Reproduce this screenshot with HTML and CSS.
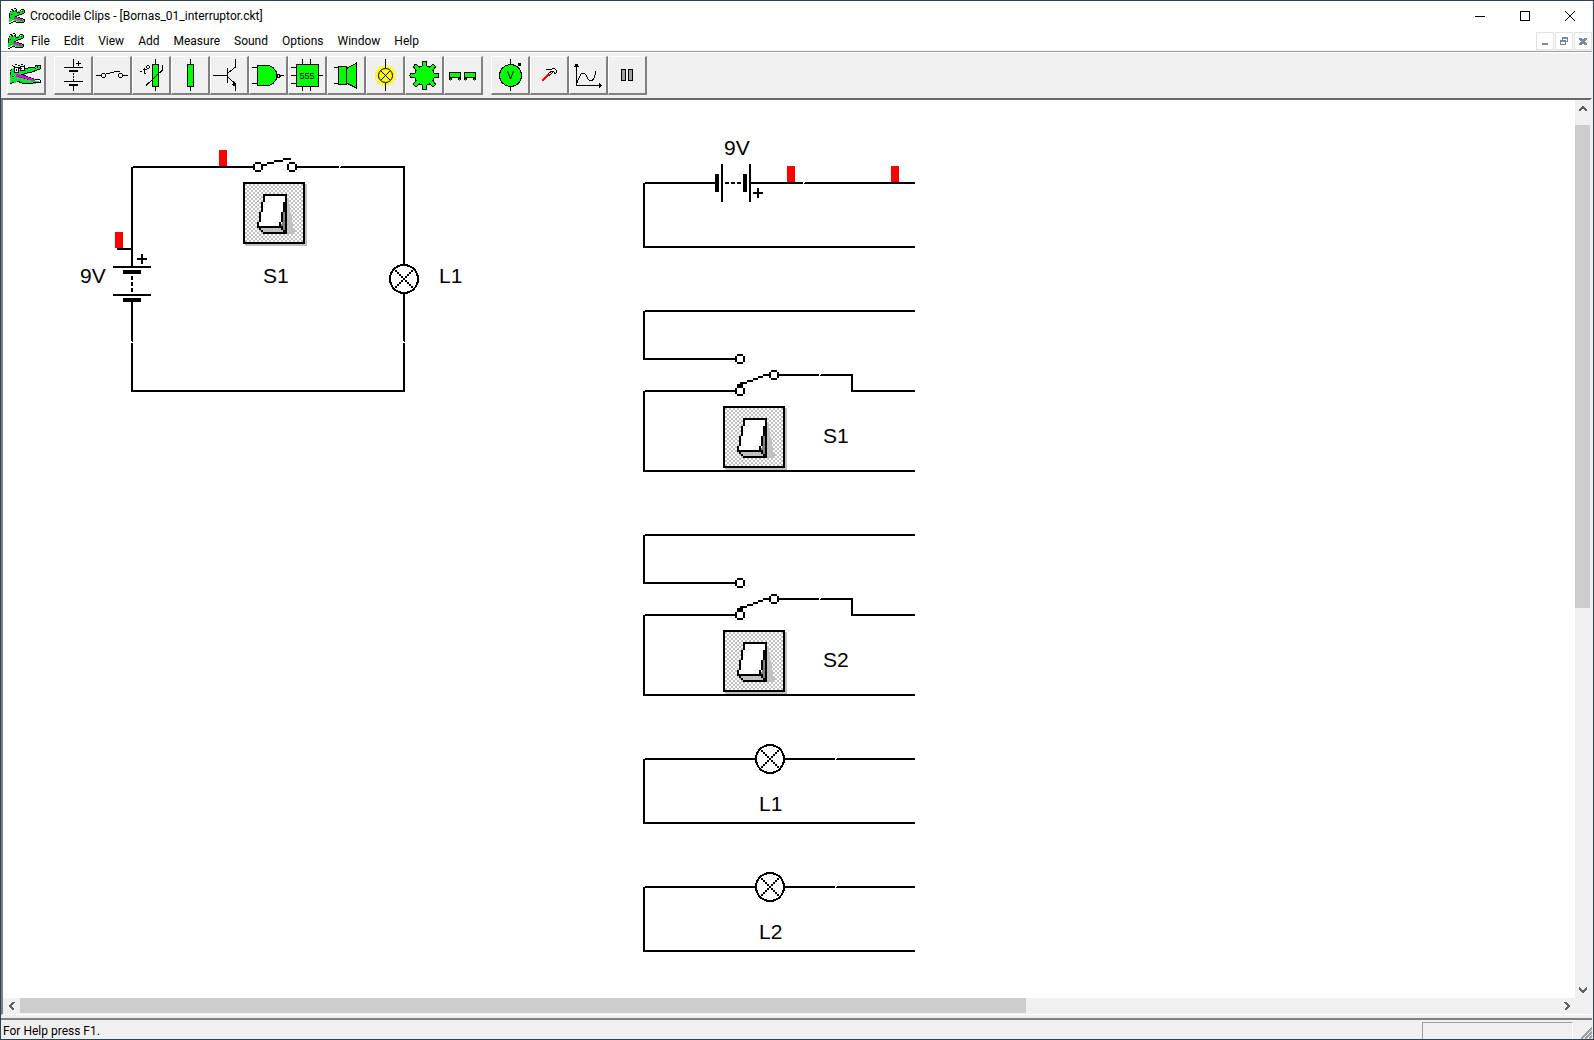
FILE: index.html
```html
<!DOCTYPE html>
<html lang="en">
<head>
<meta charset="utf-8">
<title>Crocodile Clips - [Bornas_01_interruptor.ckt]</title>
<link rel="stylesheet" href="styles.css">
</head>
<body>
<svg class="defs" aria-hidden="true">
  <defs>
    <symbol id="croc-small" viewBox="0 0 16 16">
      <path d="M1 4h1v-1h5v1h2v-1h4v-1h3v3h-2v1h-3v1h-2v1h-2v1h2v1h2v1h3v1h2v2h-8v-1h-3v-1h-2v1h-1v1H0V9h1z" fill="#00e020"/>
      <path d="M1 3h1v1H1zM0 5h1v5H0zM2 1h2v1H2zM5 0h2v1H5zM4 2h1v2H4zM7 1h1v3H7zM8 4h3v1H8zM11 2h1v1h-1zM12 1h3v1h-3zM15 2h1v3h-1zM13 5h2v1h-2zM10 6h3v1h-3zM8 7h2v1H8zM6 8h2v1H6zM9 9h2v1H9zM11 10h3v1h-3zM14 11h2v1h-2zM15 12h1v2h-1zM7 14h8v1H7zM4 13h3v1H4zM2 14h2v1H2zM0 15h2v1H0z"/>
      <path d="M2 2h2v1H2zM5 1h2v2H5zM11 7h1v1h-1zM13 6h1v1h-1z" fill="#fff"/>
      <path d="M5 9h3v1h2v1h3v1h1v1h-3v-1H8v-1H5z" fill="#e0e"/>
      <path d="M3 2h1v1H3zM6 2h1v1H6zM13 3h1v1h-1zM2 6h1v1H2z"/>
    </symbol>
    <symbol id="battery-cells" viewBox="0 0 38 36" overflow="visible">
      <path d="M0 0h38v2H0zM10 4h18v4H10zM18 10h2v4h-2zM18 16h2v4h-2zM18 22h2v4h-2zM0 28h38v2H0zM10 32h18v4H10z"/>
    </symbol>
    <pattern id="dither" width="4" height="4" patternUnits="userSpaceOnUse">
      <rect width="4" height="4" fill="#fff"/>
      <path d="M0 0h2v2H0zM2 2h2v2H2z" fill="#c0c0c0"/>
    </pattern>
    <g id="rocker">
      <path d="M2 2h62v62H2z" fill="#c0c0c0"/>
      <path d="M1 1h60v60H1z" fill="url(#dither)" stroke="#000" stroke-width="2"/>
      <path d="M44 18h2v6h1v8h2v8h1v6h2v6h-8z" fill="#c0c0c0"/>
      <path d="M21 13H43L38 45H15z" fill="#fff"/>
      <path d="M15 45H38L43 51H20z" fill="#c0c0c0"/>
      <path d="M43 14V51L38 45z" fill="#808080"/>
      <path d="M20 12h24v40H20v-2h-2v-2h-2v-2h-2v-6h2v-10h2v-10h2zM22 14v6h-2v10h-2v10h-2v4h20v-4h2v-10h2v-10h2v-6zM18 46v2h2v2h20v-2h-2v-2zM42 30h-2v10h-2v4h2v4h2z" fill-rule="evenodd"/>
    </g>
    <g id="terminal">
      <path d="M-3 -5h6v2h2v6h-2v2h-6v-2h-2v-6h2z"/>
      <path d="M-2 -3h5v6h-6v-6z" fill="#fff"/>
    </g>
    <g id="lamp">
      <circle r="14" fill="#fff" stroke="#000" stroke-width="2"/>
      <path id="lamp-stroke" d="M-11 -11h2v2h-2zM-9 -9h2v2h-2zM-7 -7h2v2h-2zM-5 -5h2v2h-2zM-3 -3h2v2h-2zM-1 -1h2v2h-2zM1 1h2v2h-2zM3 3h2v2h-2zM5 5h2v2h-2zM7 7h2v2h-2zM9 9h2v2h-2z"/>
      <use href="#lamp-stroke" transform="scale(-1 1)"/>
    </g>
    <path id="plus" d="M-5 -1h4v-4h2v4h4v2h-4v4h-2v-4h-4z"/>
    <g id="changeover">
      <path d="M645 0H915V2H645zM643 1h2V48H735V50H643zM645 80H735V82H645zM643 81h2V160H915V162H643z"/>
      <path d="M779 64H819V66H779zM820 65h1v1h-1zM821 64H853V80H915V82H851V66H821z"/>
      <path d="M763 64h6v2h-6zM758 66h5v2h-5zM753 68h5v2h-5zM747 70h6v2h-6zM740 72h7v2h-7zM737 74h6v2h-6z"/>
      <use href="#terminal" x="740" y="49"/>
      <use href="#terminal" x="740" y="81"/>
      <use href="#terminal" x="774" y="65"/>
      <use href="#rocker" transform="translate(723 96)"/>
    </g>
    <g id="lamp-loop">
      <path d="M645 0H835V2H645zM836 1h1v1h-1zM837 0H915V2H837zM643 1h2V64H915V66H643z"/>
      <use href="#lamp" x="770" y="1"/>
    </g>
    <path id="teeth" d="M19.500 7V32M7 19.500H32M10.700 10.700L28.300 28.300M28.300 10.700L10.700 28.300"/>
  </defs>
</svg>

<div class="window">
  <header class="titlebar">
    <svg class="app-icon"><use href="#croc-small"/></svg>
    <h1 class="title">Crocodile Clips - [Bornas_01_interruptor.ckt]</h1>
    <div class="caption-buttons">
      <button class="caption-button" aria-label="Minimize"><svg width="12" height="12"><path d="M1 6.500h10"/></svg></button>
      <button class="caption-button" aria-label="Maximize"><svg width="12" height="12"><path d="M1.500 1.500h9v9h-9z"/></svg></button>
      <button class="caption-button" aria-label="Close"><svg class="smooth" width="12" height="12"><path d="M1 1L11 11M11 1L1 11"/></svg></button>
    </div>
  </header>

  <nav class="menubar">
    <svg class="app-icon"><use href="#croc-small"/></svg>
    <div class="menus">
      <button class="menu">File</button>
      <button class="menu">Edit</button>
      <button class="menu">View</button>
      <button class="menu">Add</button>
      <button class="menu">Measure</button>
      <button class="menu">Sound</button>
      <button class="menu">Options</button>
      <button class="menu">Window</button>
      <button class="menu">Help</button>
    </div>
    <div class="document-buttons">
      <button class="document-button" aria-label="Minimize document"><svg width="10" height="10"><path d="M2 7h6v2H2z"/></svg></button>
      <button class="document-button" aria-label="Restore document"><svg width="10" height="10"><path d="M3 1h6v5H7V5h1V3H4v1H3zM1 4h6v5H1zM2 6v2h4V6z" fill-rule="evenodd"/></svg></button>
      <button class="document-button" aria-label="Close document"><svg width="10" height="10"><path d="M1 2h3v1h2V2h3v2H8v1H7v1h1v1h1v2H6V8H4v1H1V7h1V6h1V5H2V4H1z"/></svg></button>
    </div>
  </nav>

  <div class="toolbar" role="toolbar" aria-label="Parts">
    <div class="tool-group">
      <button class="tool" aria-label="Crocodile"><svg viewBox="1 1 36 36">
        <path d="M3 15l3-3 3 2 8-1 6-1 5-1 1-2h4v4l-4 2-6 2-7 2-3 1 4 2 7 2 8 1v2l-6 1H16l-5-2-4 1-4 1z" fill="#00e830"/>
        <path d="M3 15l2-2M18 12h3l4-1h3l1-2h4v4l-3 1-5 2-5 1-6 2M16 19l5 2 6 2 6 1v2h-3l-4 1H15l-5-2M3 28l4-2M3 16v3M5 20h2M27 11l2 2" class="ln"/>
        <path d="M7 11h4v5H7zM13 10h4v4h-4z" fill="#fff" stroke="#000"/>
        <path d="M5 9h1v1H5zM6 10h2v1H6zM8 8h2v1H8zM11 9h2v1h-2zM14 8h2v1h-2zM17 9h1v1h-1zM12 11h1v2h-1zM9 13h1v2H9zM14 12h1v1h-1zM30 10h1v2h-1z"/>
        <path d="M9 18h4v1h3v1h3v1h3v1h3v1h3v2h-4v-1h-4v-1h-4v-1h-4v-1h-3z" fill="#e0e"/>
        <path d="M11 20h1v1h-1zM14 21h1v1h-1zM17 22h1v1h-1zM20 23h1v1h-1zM16 19h1v1h-1z" fill="#505"/>
        <path d="M19 19h1v1h-1zM22 18h1v1h-1zM25 17h1v1h-1zM28 16h1v1h-1z" fill="#fff"/>
      </svg></button>
    </div>
    <div class="tool-group">
      <button class="tool" aria-label="Battery"><svg viewBox="1 1 36 36">
        <path d="M19 3h1v8h-1zM10 11h19v1H10zM15 14h9v2h-9zM19 17h1v2h-1zM19 20h1v2h-1zM19 23h1v2h-1zM10 25h19v1H10zM15 28h9v2h-9zM19 30h1v5h-1zM22 7h5v1h-5zM24 5h1v5h-1z"/>
      </svg></button>
      <button class="tool" aria-label="Switch"><svg viewBox="1 1 36 36">
        <path d="M3 19h5v1H3zM30 19h5v1h-5zM13 17h4v1h-4zM17 16h4v1h-4zM21 15h6v1h-6zM9 17h3v1H9zM9 21h3v1H9zM8 18h1v3H8zM12 18h1v3h-1zM26 17h3v1h-3zM26 21h3v1h-3zM25 18h1v3h-1zM29 18h1v3h-1z"/>
      </svg></button>
      <button class="tool" aria-label="Thermistor"><svg viewBox="1 1 36 36">
        <path d="M23.500 3v32" class="ln"/><path d="M20.500 8.500h6v22h-6z" class="part"/>
        <path d="M14 29.500L30.500 14V8.500M8 15.500h2M11 13.500h4M12.500 12v5M12 17.500h2" class="ln"/>
        <path d="M15 9h2v1h1v2h-1v1h-2v-1h-1v-2h1zM15 10v2h2v-2z" fill-rule="evenodd"/>
      </svg></button>
      <button class="tool" aria-label="Resistor"><svg viewBox="1 1 36 36">
        <path d="M19.500 3v32" class="ln"/><path d="M16.500 8.500h6v22h-6z" class="part"/>
      </svg></button>
      <button class="tool" aria-label="Transistor"><svg viewBox="1 1 36 36">
        <path d="M3 19.500h15M17.500 12v15M18 17l7.500-6V3M18 21l7.500 7v7" class="ln"/><path d="M25 30l-4-1 3-3z"/>
      </svg></button>
      <button class="tool" aria-label="Logic gate"><svg viewBox="1 1 36 36">
        <path d="M3 11.500h5M3 27.500h5M30 19.500h5" class="ln"/>
        <path d="M8.500 9.500H20l4 2 3 4v8l-3 4-4 2H8.500z" class="part"/>
        <path d="M28 18h2v1h1v1h-1v1h-2z" fill="#f0f0f0" stroke="#000"/>
      </svg></button>
      <button class="tool" aria-label="Integrated circuit"><svg viewBox="1 1 36 36">
        <path d="M14.500 3v32M22.500 3v32M3 11.500h28M3 19.500h32M3 27.500h28" class="ln"/>
        <path d="M8.500 8.500h22v22h-22z" class="part"/>
        <text x="19" y="23" class="chip-text">555</text>
      </svg></button>
      <button class="tool" aria-label="Loudspeaker"><svg viewBox="1 1 36 36">
        <path d="M7 11.500h4M7 27.500h4" class="ln"/>
        <path d="M11.500 10.500h8v18h-8zM19.500 12.500L29.500 7v25l-10-5z" class="part"/>
      </svg></button>
      <button class="tool" aria-label="Lamp"><svg viewBox="1 1 36 36">
        <circle cx="19.500" cy="19.500" r="10" fill="none" stroke="#ff0" stroke-width="2" stroke-dasharray="1 1"/>
        <circle cx="19.500" cy="19.500" r="9" fill="#ff0"/>
        <path d="M19.500 3v9M19.500 27v8" class="ln"/>
        <circle cx="19.500" cy="19.500" r="7" class="ln smooth"/>
        <path d="M15 15l9 9M24 15l-9 9" class="ln smooth"/>
      </svg></button>
      <button class="tool" aria-label="Gear"><svg viewBox="1 1 36 36">
        <g fill="none" stroke-linecap="round">
          <use href="#teeth" stroke="#000" stroke-width="5"/>
          <circle cx="19.500" cy="19.500" r="10" fill="#0f0" stroke="#000"/>
          <use href="#teeth" stroke="#0f0" stroke-width="3"/>
        </g>
        <path d="M19 19h1v1h-1zM10 19h1v1h-1zM28 19h1v1h-1zM19 10h1v1h-1zM19 28h1v1h-1z" fill="#a0a0a0"/>
      </svg></button>
      <button class="tool" aria-label="Carriages"><svg viewBox="1 1 36 36">
        <path d="M5.500 16.500h11v5h-11zM20.500 16.500h11v5h-11z" class="part"/>
        <path d="M5 22h3v2H5zM14 22h3v2h-3zM20 22h3v2h-3zM29 22h3v2h-3z"/><path d="M6 23h1v2H6zM15 23h1v2h-1zM21 23h1v2h-1zM30 23h1v2h-1z" fill="#808080"/>
      </svg></button>
    </div>
    <div class="tool-group">
      <button class="tool" aria-label="Voltmeter"><svg viewBox="1 1 36 36">
        <path d="M19.500 3v32" class="ln"/><circle cx="19.500" cy="19.500" r="11" class="part"/>
        <path d="M16.500 15l3 8 3-8" class="ln smooth"/><path d="M27 7h3v3h-3z"/>
      </svg></button>
      <button class="tool" aria-label="Probe"><svg viewBox="1 1 36 36">
        <path d="M12 25l7-7" fill="none" stroke="#f00" stroke-width="2"/>
        <path d="M18 18l4-3M19 20l4-4M16 14l2-1h4l2-1 2 2v3l-2 1v-2l-2-1M19 16h2" class="ln"/>
      </svg></button>
      <button class="tool" aria-label="Graph"><svg viewBox="1 1 36 36">
        <path d="M7.500 8v22M7 29.500h25M5 10.500h1l1-2h1l1 2h1M30 27.500l2 2-2 2" class="ln"/>
        <path d="M8 27c2-5 3-10 6-10 4 0 4 8 8 8 3 0 4-5 5-10" class="ln"/>
      </svg></button>
      <button class="tool" aria-label="Pause"><svg viewBox="1 1 36 36">
        <path d="M13.500 13.500h4v11h-4zM20.500 13.500h4v11h-4z" fill="#a0a0a0" stroke="#000"/>
      </svg></button>
    </div>
  </div>

  <main class="workspace">
    <div class="sheet">
      <svg class="circuit" role="img" aria-label="Circuit diagram">
        <g transform="translate(-3 -100)">
          <!-- Main circuit -->
          <path d="M133 166H254V168H133zM131 167h2V266h-2zM117 248H131V250H117zM131 302h2V341h-2zM132 341h1v1h-1zM131 343h2V390H403V343h2V392H131zM403 294h2V341h-2zM404 341h1v1h-1z"/>
          <path d="M297 166H339V168H297zM340 167h1v1h-1zM341 166H405V264H403V168H341z"/>
          <path d="M262 164h5v2h-5zM267 162h7v2h-7zM274 160h9v2h-9zM283 158h8v2h-8z"/>
          <path d="M219 150h8v16h-8zM115 232h8v16h-8z" class="clip"/>
          <use href="#battery-cells" x="113" y="266" width="38" height="36"/>
          <use href="#plus" x="142" y="259"/>
          <use href="#terminal" x="258" y="167"/>
          <use href="#terminal" x="292" y="167"/>
          <use href="#rocker" transform="translate(243 182)"/>
          <use href="#lamp" x="404" y="279"/>
          <text x="80" y="283">9V</text>
          <text x="263" y="283">S1</text>
          <text x="439" y="283">L1</text>

          <!-- Supply -->
          <path d="M645 182H715V184H645zM643 183h2V246H915V248H643zM751 182H803V184H751zM804 183h1v1h-1zM805 182H915V184H805z"/>
          <path d="M787 166h8v16h-8zM891 166h8v16h-8z" class="clip"/>
          <path d="M715 174h4v18h-4zM721 164h2v38h-2zM725 182h4v2h-4zM731 182h4v2h-4zM737 182h4v2h-4zM743 174h4v18h-4zM749 164h2v38h-2z"/>
          <use href="#plus" x="758" y="193"/>
          <text x="724" y="155">9V</text>

          <!-- Changeover switches -->
          <use href="#changeover" transform="translate(0 310)"/>
          <text x="823" y="443">S1</text>
          <use href="#changeover" transform="translate(0 534)"/>
          <text x="823" y="667">S2</text>

          <!-- Lamps -->
          <use href="#lamp-loop" transform="translate(0 758)"/>
          <text x="759" y="811">L1</text>
          <use href="#lamp-loop" transform="translate(0 886)"/>
          <text x="759" y="939">L2</text>
        </g>
      </svg>
    </div>
    <div class="scrollbar vertical">
      <button class="arrow" aria-label="Scroll up"><svg width="8" height="8"><path d="M0 6l4-4 4 4"/></svg></button>
      <div class="thumb"></div>
      <div class="track"></div>
      <button class="arrow" aria-label="Scroll down"><svg width="8" height="8"><path d="M0 2l4 4 4-4"/></svg></button>
    </div>
    <div class="scrollbar horizontal">
      <button class="arrow" aria-label="Scroll left"><svg width="8" height="8"><path d="M6 0L2 4l4 4"/></svg></button>
      <div class="thumb"></div>
      <div class="track"></div>
      <button class="arrow" aria-label="Scroll right"><svg width="8" height="8"><path d="M2 0l4 4-4 4"/></svg></button>
    </div>
  </main>

  <footer class="statusbar">
    <span class="status-text">For Help press F1.</span>
    <span class="status-pane"></span>
    <svg class="grip" width="12" height="12"><path d="M1 12L12 1M5 12l7-7M9 12l3-3"/></svg>
  </footer>
</div>
</body>
</html>
```
FILE: styles.css
```css
* {
  box-sizing: border-box;
}

body {
  margin: 0;
  font: 12px/16px Roboto, "Open Sans", sans-serif;
  color: #000;
}

button {
  margin: 0;
  padding: 0;
  border: 0;
  background: none;
  font: inherit;
  color: inherit;
}

svg {
  display: block;
  shape-rendering: crispEdges;
}

.smooth {
  shape-rendering: auto;
}

.defs {
  position: absolute;
  width: 0;
  height: 0;
}

.window {
  display: flex;
  flex-direction: column;
  height: 100vh;
  padding-right: 1px;
  border: 1px solid #2b4452;
  background: #f0f0f0;
}

/* Title bar */
.titlebar {
  display: flex;
  align-items: center;
  height: 30px;
  padding-left: 8px;
  background: #fff;
}

.app-icon {
  width: 16px;
  height: 16px;
}

.title {
  flex: 1;
  margin: 0 0 0 5px;
  font-size: 12px;
  font-weight: 400;
}

.caption-buttons {
  display: flex;
}

.caption-button {
  display: grid;
  place-items: center;
  width: 45px;
  height: 30px;
}

.caption-button svg {
  fill: none;
  stroke: #000;
}

/* Menu bar */
.menubar {
  display: flex;
  align-items: center;
  height: 20px;
  padding-left: 7px;
  background: #fff;
  border-bottom: 1px solid #f0f0f0;
}

.menus {
  display: flex;
  flex: 1;
}

.menu {
  padding: 0 7px;
}

.document-buttons {
  display: flex;
  gap: 1px;
}

.document-button {
  display: grid;
  place-items: center;
  width: 18px;
  height: 18px;
  border: 1px solid #e3e3e3;
}

.document-button svg {
  fill: #7b8a9a;
}

/* Toolbar */
.toolbar {
  display: flex;
  gap: 8px;
  height: 47px;
  padding: 4px 6px 0;
  border-top: 1px solid #a0a0a0;
  box-shadow: inset 0 1px #fff;
}

.tool-group {
  display: flex;
}

.tool {
  width: 39px;
  height: 39px;
  border: solid;
  border-width: 1px 2px 2px 1px;
  border-color: #fff #808080 #808080 #fff;
}

.tool svg {
  width: 36px;
  height: 36px;
}

.ln {
  fill: none;
  stroke: #000;
}

.part {
  fill: #0f0;
  stroke: #000;
}

.chip-text {
  font: 9px "Liberation Sans", Arial, sans-serif;
  text-anchor: middle;
}

/* Drawing area and its scrollbars */
.workspace {
  flex: 1;
  display: grid;
  grid-template: minmax(0, 1fr) 15px / minmax(0, 1fr) 15px;
  min-height: 0;
  padding-bottom: 1px;
  border: solid;
  border-width: 2px 2px 1px;
  border-color: #696969 #f0f0f0 #fff #808080;
}

.sheet {
  background: #fff;
  overflow: hidden;
}

.circuit {
  width: 100%;
  height: 100%;
}

.circuit text {
  font: 21px "Liberation Sans", Arial, sans-serif;
}

.clip {
  fill: #f00;
}

.scrollbar {
  display: flex;
}

.vertical {
  flex-direction: column;
}

.arrow {
  display: grid;
  place-items: center;
  flex: 0 0 17px;
}

.vertical .arrow:first-child {
  flex-basis: 25px;
  padding-bottom: 8px;
}

.arrow svg {
  fill: none;
  stroke: #606060;
  stroke-width: 2;
}

.thumb {
  background: #cdcdcd;
}

.vertical .thumb {
  flex: 564;
}

.vertical .track {
  flex: 436;
}

.horizontal .thumb {
  flex: 654;
}

.horizontal .track {
  flex: 346;
}

/* Status bar */
.statusbar {
  display: flex;
  align-items: flex-end;
  height: 21px;
  margin-top: 3px;
  border-top: 2px solid #808080;
}

.status-text {
  flex: 1;
  padding-left: 2px;
}

.status-pane {
  width: 151px;
  height: 17px;
  margin-right: 7px;
  border: solid;
  border-width: 1px 1px 0;
  border-color: #a0a0a0 #fff #a0a0a0 #a0a0a0;
}

.grip {
  fill: none;
  stroke: #a0a0a0;
  stroke-width: 2;
}
```
